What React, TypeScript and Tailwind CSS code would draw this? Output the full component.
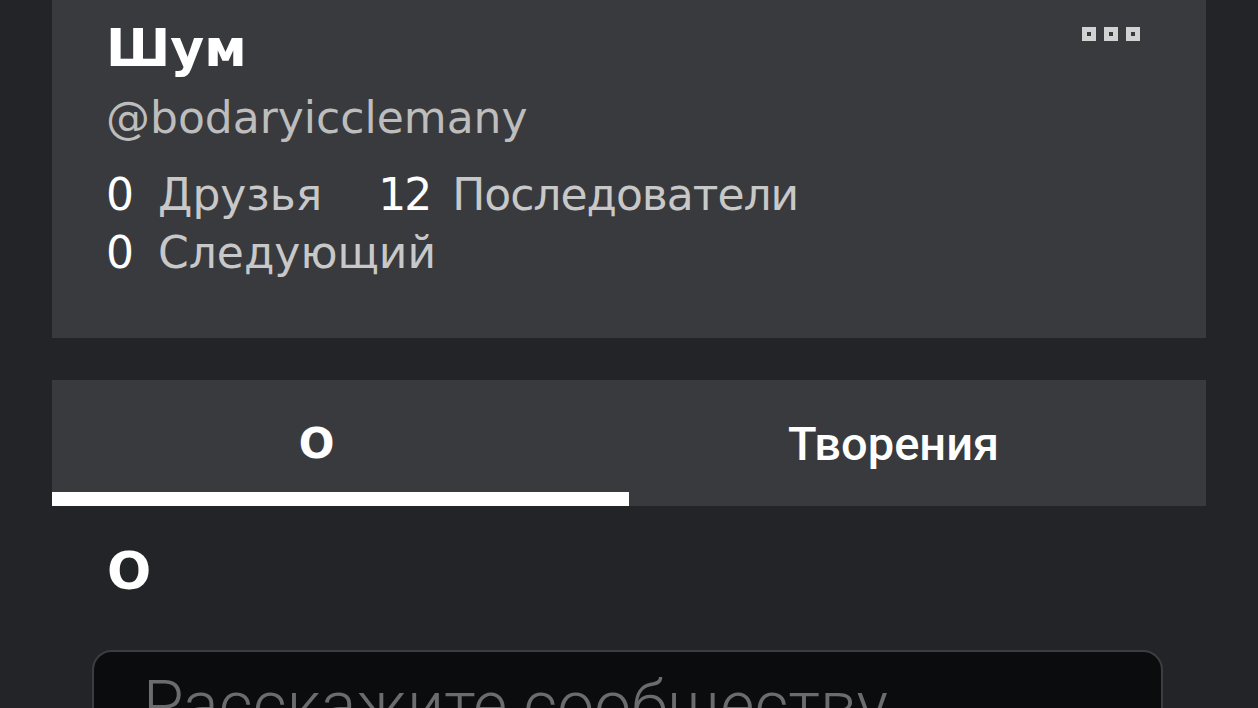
import React from "react";

const gotham = { fontFamily: '"DejaVu Sans", "Noto Sans", sans-serif' };
const roboto = { fontFamily: 'Roboto, "Noto Sans", sans-serif' };

function Dots() {
  return (
    <div className="absolute right-[66px] top-[27px] flex gap-[8px]">
      {[0, 1, 2].map((i) => (
        <div key={i} className="w-[14px] h-[14px] border-[5px] border-[#d2d2d2] bg-[#393a3d]" />
      ))}
    </div>
  );
}

export default function App() {
  return (
    <div className="h-[708px] w-full overflow-hidden bg-[#232427] px-[52px]" style={gotham}>
      <div className="relative h-[338px] bg-[#393a3d] pl-[54px] pt-[14px]">
        <Dots />
        <div className="text-[52px] font-bold leading-[68px] text-white">Шум</div>
        <div className="mt-[10px] text-[44px] leading-[52px] text-[#bdbdbd]">@bodaryicclemany</div>
        <div className="mt-[22px] flex text-[44px] leading-[58px]">
          <span className="text-white">0</span>
          <span className="ml-[24px] text-[#c8c8c8]">Друзья</span>
          <span className="ml-[56px] text-white tracking-[-2px]">12</span>
          <span className="ml-[22px] text-[#c8c8c8] tracking-[-1px]">Последователи</span>
        </div>
        <div className="flex text-[44px] leading-[58px]">
          <span className="text-white">0</span>
          <span className="ml-[24px] text-[#c8c8c8]">Следующий</span>
        </div>
      </div>
      <div className="mt-[42px] grid h-[126px] grid-cols-2 bg-[#393a3d] text-white">
        <div className="flex items-center justify-center border-b-[14px] border-white pt-[16px] pr-[48px]">
          <span className="text-[42px] font-bold leading-none">О</span>
        </div>
        <div className="flex items-center justify-center pr-[48px]">
          <span className="text-[47px] font-medium leading-none" style={roboto}>Творения</span>
        </div>
      </div>
      <div className="pl-[55px] pt-[35px] text-[52px] font-bold leading-[60px] text-white">О</div>
      <div className="ml-[40px] mr-[43px] mt-[49px] h-[200px] rounded-[20px] border-2 border-[#3c3d40] bg-[#0b0c0e] pl-[49px] pt-[15px]">
        <div className="text-[66px] font-light leading-[77px] text-[#6b6c6e] whitespace-nowrap" style={roboto}>
          Расскажите сообществу
        </div>
      </div>
    </div>
  );
}
